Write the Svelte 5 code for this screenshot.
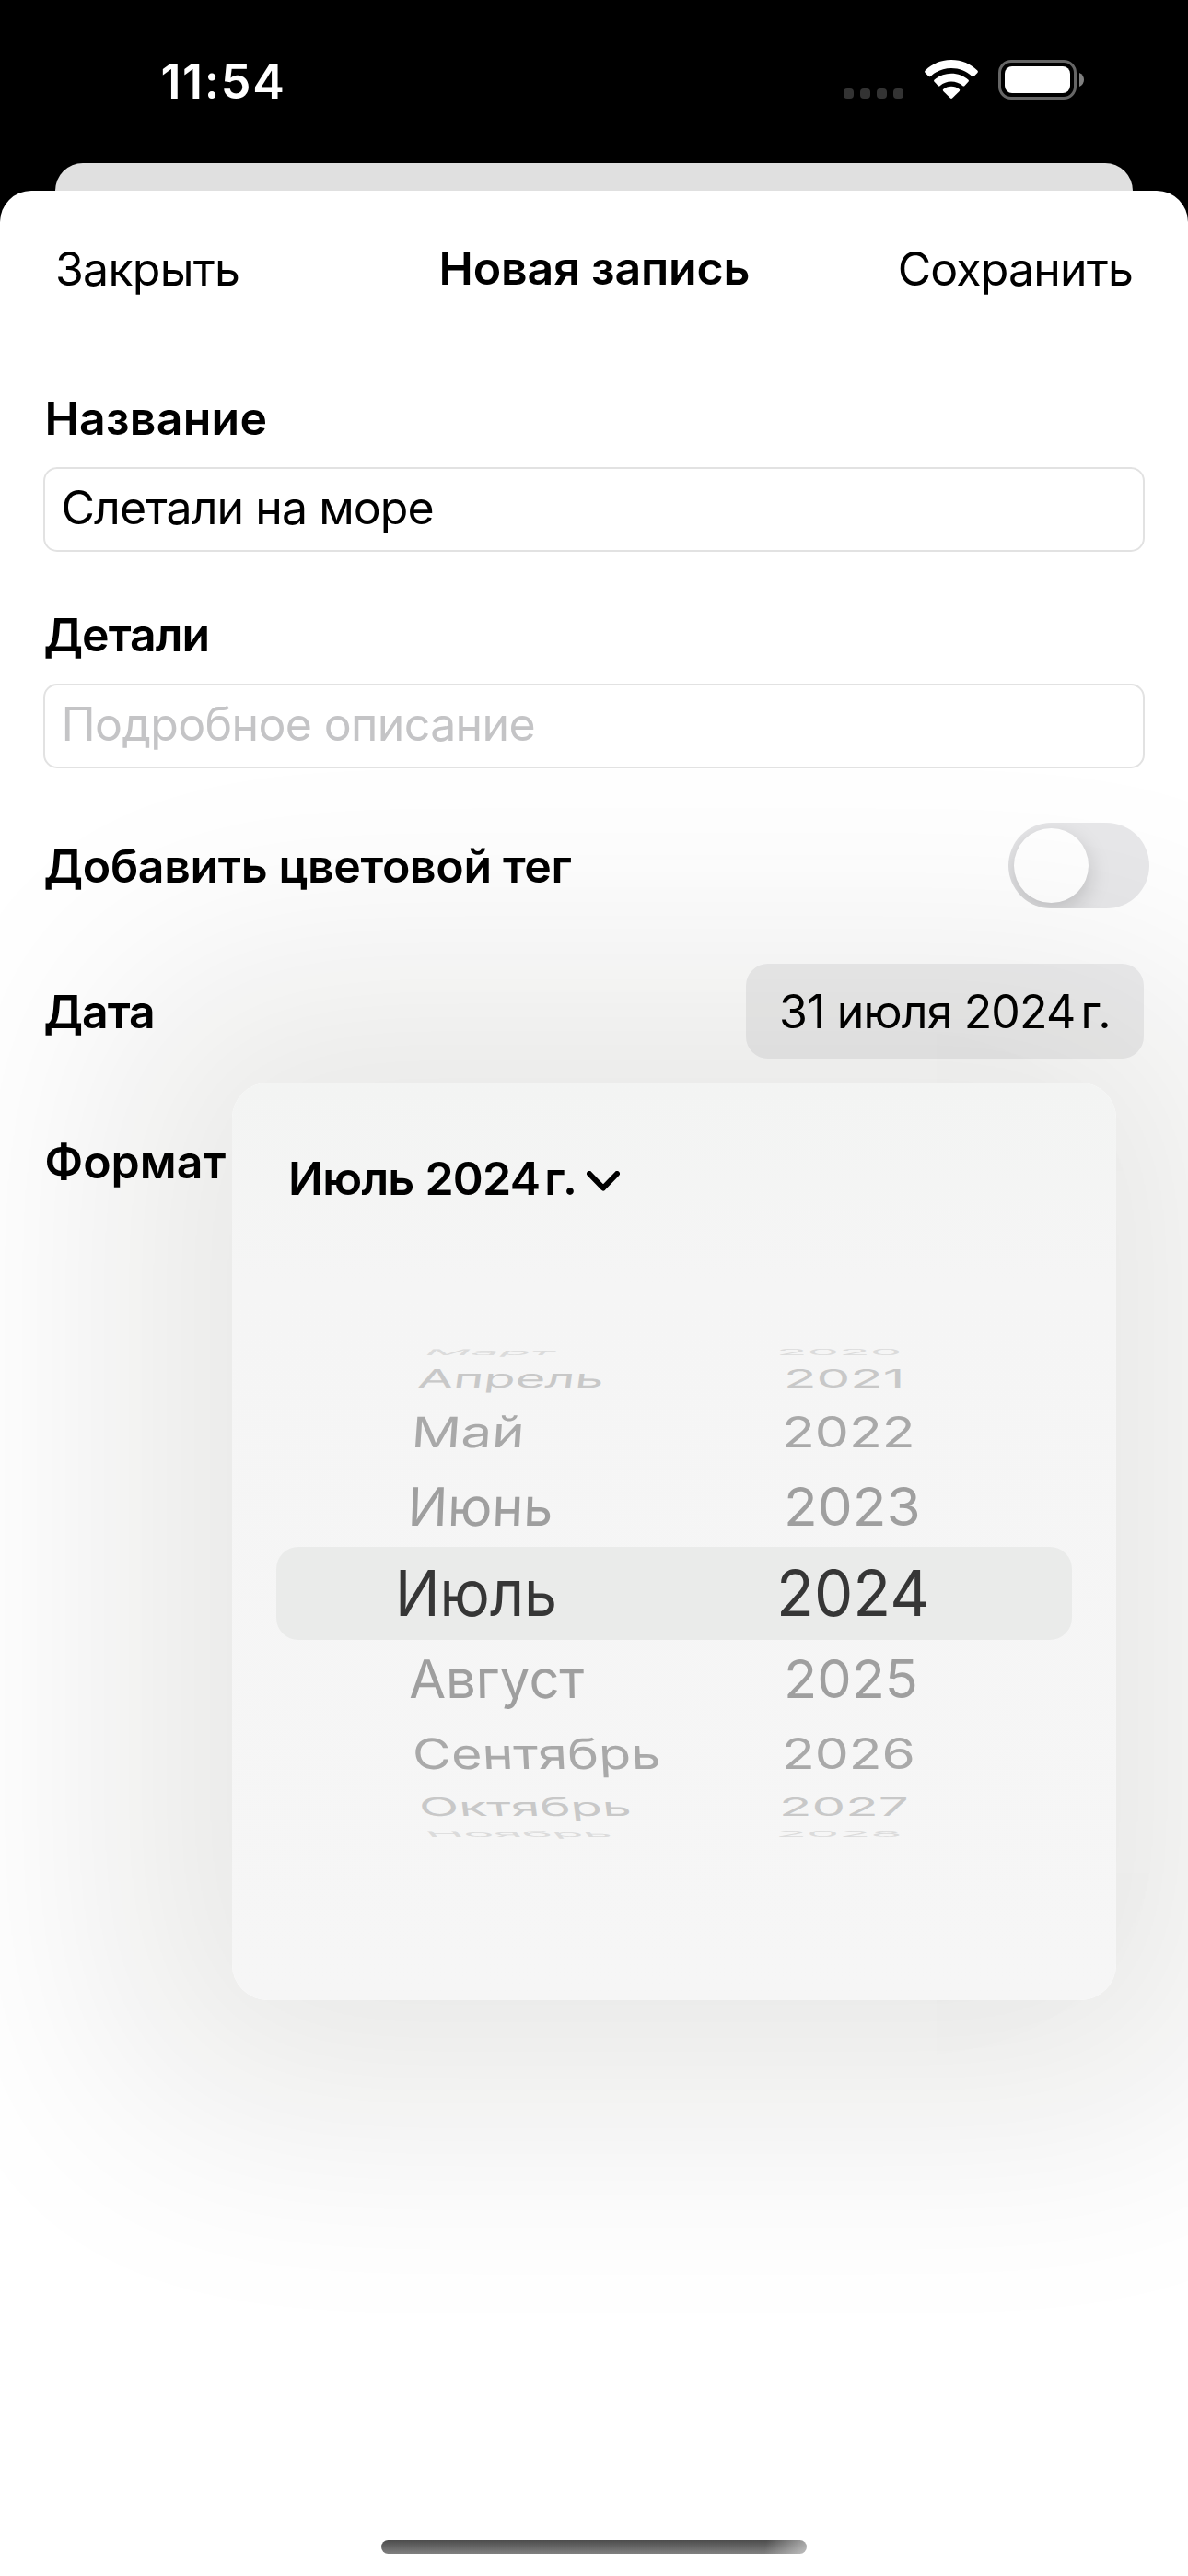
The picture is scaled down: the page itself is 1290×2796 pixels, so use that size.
<script>
  // Each wheel row: height of its slice of the drum, vertical squash, tint, lean, and the two labels.
  // Labels carry [text, left offset inside the column, horizontal stretch].
  const rows = [
    { h: 17.4, sy: 0.157, c: '#dbdbdb', lean: 45, month: ['Март', 162, 0.966], year: ['2020', 543, 0.959] },
    { h: 39.8, sy: 0.478, c: '#c8c8c8', lean: 8, month: ['Апрель', 154, 0.977], year: ['2021', 551, 1.017] },
    { h: 76, sy: 0.8, c: '#a9a9a9', lean: 4, month: ['Май', 146.5, 1.042], year: ['2022', 548.5, 1.026] },
    { h: 86.4, sy: 1, c: '#9f9f9f', lean: 2, month: ['Июнь', 143, 1.001], year: ['2023', 550.5, 1.051] },
    { h: 101, sy: 1, c: '#363636', lean: 0, selected: true, month: ['Июль', 129, 0.935], year: ['2024', 542.5, 0.973] },
    { h: 86.4, sy: 1, c: '#9f9f9f', lean: -1, month: ['Август', 143.5, 1.011], year: ['2025', 550.5, 1.036] },
    { h: 76, sy: 0.8, c: '#a9a9a9', lean: -3, month: ['Сентябрь', 147.5, 1.002], year: ['2026', 548.5, 1.024] },
    { h: 39.8, sy: 0.478, c: '#c8c8c8', lean: -7, month: ['Октябрь', 154.5, 0.983], year: ['2027', 545.5, 1.016] },
    { h: 17.4, sy: 0.157, c: '#dbdbdb', lean: -40, month: ['Ноябрь', 162, 0.961], year: ['2028', 542, 0.973] }
  ];
</script>

<div class="screen">
  <header class="status">
    <time>11:54</time>
    <div class="indicators">
      <div class="dots"><i></i><i></i><i></i><i></i></div>
      <svg class="wifi" viewBox="0 0 58 42">
        <path d="M29 0C40.200 0 50.200 4.300 57.300 11.500Q58.500 12.700 57.400 13.900L53.700 17.800Q52.600 18.800 51.400 17.700C45.400 12.200 37.600 9 29 9S12.600 12.200 6.600 17.700Q5.400 18.800 4.300 17.800L.6 13.900Q-.5 12.700 .7 11.500C7.800 4.300 17.800 0 29 0Z" />
        <path d="M29 14.700C36.100 14.700 42.500 17.300 47.300 21.600Q48.500 22.700 47.400 23.800L43.500 27.900Q42.400 29 41.200 27.900C37.900 25.100 33.600 23.500 29 23.500S20.100 25.100 16.800 27.900Q15.600 29 14.500 27.900L10.600 23.800Q9.500 22.700 10.700 21.600C15.500 17.300 21.900 14.700 29 14.700Z" />
        <path d="M29 28.800C32.300 28.800 35.300 29.900 37.600 31.700Q38.800 32.700 37.700 33.900L30 41.500Q29 42.400 28 41.500L20.300 33.900Q19.200 32.700 20.400 31.700C22.700 29.900 25.700 28.800 29 28.800Z" />
      </svg>
      <svg class="battery" viewBox="0 0 93 43">
        <rect x="1.500" y="1.500" width="82" height="40" rx="12.500" fill="none" stroke="#666" stroke-width="3" />
        <rect x="7" y="7" width="71" height="29" rx="8" fill="#fff" />
        <path d="M88 14C91.300 15.400 93 18.200 93 21.500S91.300 27.600 88 29Z" fill="#808080" />
      </svg>
    </div>
  </header>

  <div class="behind"></div>

  <main class="sheet">
    <nav>
      <span class="close">Закрыть</span>
      <h1>Новая запись</h1>
      <span class="save">Сохранить</span>
    </nav>

    <form>
      <section class="group">
        <label class="t-name" for="name">Название</label>
        <div class="field" id="name">Слетали на море</div>
      </section>
      <section class="group">
        <label class="t-details" for="details">Детали</label>
        <div class="field empty" id="details">Подробное описание</div>
      </section>
      <div class="row tag">
        <span class="label t-tag">Добавить цветовой тег</span>
        <div class="toggle"><div class="knob"></div></div>
      </div>
      <div class="row date">
        <span class="label t-date">Дата</span>
        <div class="chip">31 июля 2024<span class="unit">г.</span></div>
      </div>
      <div class="row format"><span class="label t-format">Формат</span></div>
    </form>
  </main>

  <aside class="popover">
    <div class="heading">
      <span>Июль 2024</span><span class="unit">г.</span>
      <svg viewBox="0 0 36 22"><path d="M3 3L18 18.500L33 3" /></svg>
    </div>
    <div class="drum">
      {#each rows as row}
        <div class="slice" class:selected={row.selected} style="height:{row.h}px;color:{row.c}">
          <span class="cell" style="left:{row.month[1]}px;transform:skewX({-row.lean}deg) scale({row.month[2]},{row.sy})">{row.month[0]}</span>
          <span class="cell" style="left:{row.year[1]}px;transform:scale({row.year[2]},{row.sy})">{row.year[0]}</span>
        </div>
      {/each}
    </div>
  </aside>

  <div class="home"></div>
</div>

<style>
  :global(body) { background: #000; }
  .screen {
    position: relative;
    width: 1290px;
    height: 2796px;
    overflow: hidden;
    display: flex;
    flex-direction: column;
    background: #000;
    color: #000;
    font: 400 50px/60px Inter, 'Liberation Sans', sans-serif;
    white-space: nowrap;
  }
  .status {
    height: 177px;
    box-sizing: border-box;
    padding: 0 113px 0 174.500px;
    display: flex;
    justify-content: space-between;
    align-items: flex-start;
    color: #fff;
  }
  time { margin-top: 58.500px; font-weight: 600; font-size: 52px; letter-spacing: 1.600px; }
  .indicators { display: flex; align-items: flex-start; margin-top: 65px; }
  .dots { display: flex; gap: 7px; margin: 31px 23px 0 0; }
  .dots i { width: 11px; height: 11px; border-radius: 4px; background: #333; }
  .wifi { width: 58px; height: 42px; fill: #fff; margin-right: 22px; }
  .battery { width: 93px; height: 43px; }

  .behind { height: 30px; margin: 0 60px; border-radius: 30px 30px 0 0; background: #e0e0e0; }
  .sheet { flex: 1; background: #fff; border-radius: 34px 34px 0 0; }

  nav {
    height: 170px;
    padding: 0 60px;
    display: grid;
    grid-template-columns: 1fr auto 1fr;
    align-items: center;
  }
  .close { letter-spacing: -0.760px; }
  h1 { margin: 0; font-size: 50px; line-height: 60px; font-weight: 600; letter-spacing: -0.130px; padding: 0 0 2px 1px; }
  .save { justify-self: end; letter-spacing: -0.850px; }

  form { padding: 47px 48px 0 47px; display: flex; flex-direction: column; }
  .group { display: flex; flex-direction: column; gap: 23px; margin: 0 -1px 60px 0; }
  .group + .group { margin-bottom: 59px; }
  label, .label { font-weight: 600; padding-left: 0.500px; }
  .t-name { letter-spacing: 0.270px; padding-left: 1.500px; }
  .t-details { letter-spacing: -1px; }
  .t-tag { letter-spacing: -0.330px; }
  .t-date { letter-spacing: -1px; }
  .t-format { padding-left: 1.500px; }
  .field {
    height: 92px;
    box-sizing: border-box;
    border: 2px solid #e2e2e2;
    border-radius: 15px;
    padding: 12px 17.500px;
    letter-spacing: -0.930px;
  }
  .field.empty { color: #c4c4c6; letter-spacing: -0.630px; }
  .row { display: flex; justify-content: space-between; align-items: center; }
  .tag { height: 93px; margin-bottom: 60px; }
  .date { height: 103px; margin-bottom: 82px; }
  .toggle {
    width: 153px;
    height: 93px;
    box-sizing: border-box;
    padding: 6px;
    margin-right: -6px;
    border-radius: 47px;
    overflow: hidden;
    background: #e8e8ea;
  }
  .knob { width: 81px; height: 81px; border-radius: 50%; background: #fff; box-shadow: 0 9px 24px rgba(0, 0, 0, 0.170); }
  .chip {
    width: 432px;
    height: 103px;
    box-sizing: border-box;
    padding: 22px 0 20px 36px;
    border-radius: 24px;
    background: #eeeeef;
    letter-spacing: -0.850px;
  }
  .unit { margin-left: 6px; letter-spacing: 0.300px; }

  /* Two stacked shadows give a softer, wider falloff than a single blur. */
  .popover {
    position: absolute;
    left: 252px;
    top: 1175px;
    width: 960px;
    height: 996px;
    border-radius: 39px;
    background: linear-gradient(to bottom, #f3f4f3, #f5f5f5 22%, #f6f6f6);
    box-shadow:
      0 0 256px 125px rgba(22, 22, 0, 0.093),
      0 0 256px -125px rgba(22, 22, 0, 0.093);
  }
  .heading { display: flex; align-items: center; padding: 74px 0 0 61px; font-weight: 600; letter-spacing: -0.750px; }
  .heading .unit { margin-left: 5px; letter-spacing: 0.500px; }
  .heading svg { width: 36px; height: 22px; margin: 6px 0 0 10px; }
  .heading path { fill: none; stroke: #000; stroke-width: 6; stroke-linecap: round; stroke-linejoin: round; }
  .drum { margin: 150px 48px 0; display: flex; flex-direction: column; }
  .slice { position: relative; flex: none; font-size: 57.300px; line-height: 1; }
  .selected { border-radius: 24px; background: #eaebea; font-size: 69px; }
  /* Labels sit on the curved face of the wheel, so each has its own offset and squash. */
  .cell { position: absolute; top: 50%; margin-top: -0.500em; transform-origin: left center; }

  .home {
    position: absolute;
    left: 414px;
    bottom: 24px;
    width: 462px;
    height: 15px;
    border-radius: 8px;
    background: linear-gradient(100deg, transparent 90%, rgba(255, 255, 255, 0.500)), linear-gradient(#4c4c4c, #808080);
  }
</style>
